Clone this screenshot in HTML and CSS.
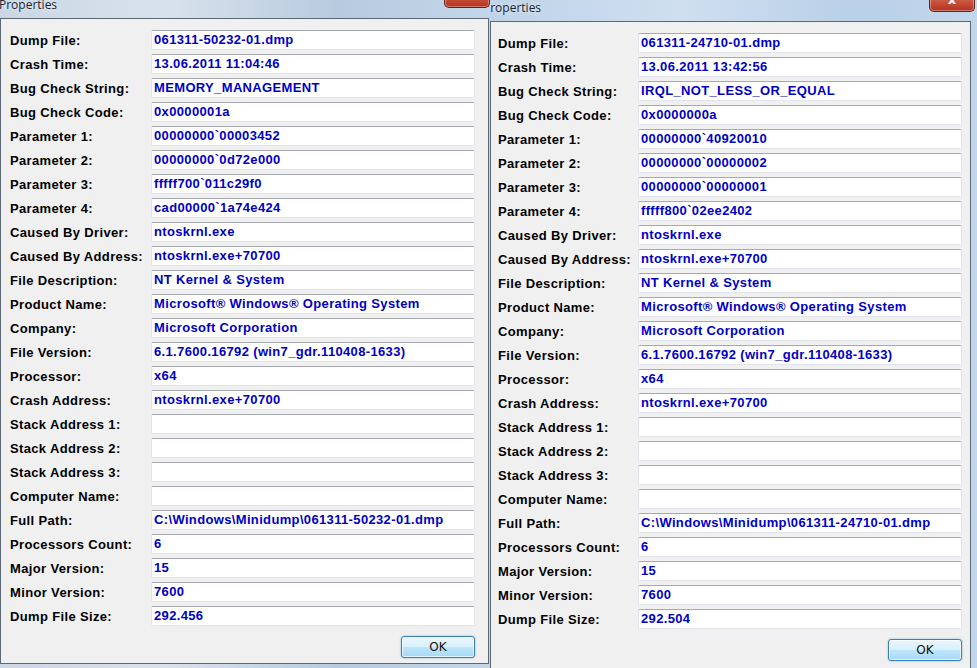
FILE: index.html
```html
<!DOCTYPE html>
<html lang="en">
<head>
  <meta charset="UTF-8" />
  <title>Properties</title>
  <link rel="stylesheet" href="styles.css">
</head>
<body>

  <div class="desktop">

    <!-- second dump, opened first -->
    <div class="window window-back">
      <div class="titlebar">
        <span class="title">Properties</span>
        <span class="close-btn">x</span>
      </div>
      <div class="client">
        <div class="row"><span class="label">Dump File:</span><span class="field">061311-24710-01.dmp</span></div>
        <div class="row"><span class="label">Crash Time:</span><span class="field">13.06.2011 13:42:56</span></div>
        <div class="row"><span class="label">Bug Check String:</span><span class="field">IRQL_NOT_LESS_OR_EQUAL</span></div>
        <div class="row"><span class="label">Bug Check Code:</span><span class="field">0x0000000a</span></div>
        <div class="row"><span class="label">Parameter 1:</span><span class="field">00000000`40920010</span></div>
        <div class="row"><span class="label">Parameter 2:</span><span class="field">00000000`00000002</span></div>
        <div class="row"><span class="label">Parameter 3:</span><span class="field">00000000`00000001</span></div>
        <div class="row"><span class="label">Parameter 4:</span><span class="field">fffff800`02ee2402</span></div>
        <div class="row"><span class="label">Caused By Driver:</span><span class="field">ntoskrnl.exe</span></div>
        <div class="row"><span class="label">Caused By Address:</span><span class="field">ntoskrnl.exe+70700</span></div>
        <div class="row"><span class="label">File Description:</span><span class="field">NT Kernel &amp; System</span></div>
        <div class="row"><span class="label">Product Name:</span><span class="field">Microsoft® Windows® Operating System</span></div>
        <div class="row"><span class="label">Company:</span><span class="field">Microsoft Corporation</span></div>
        <div class="row"><span class="label">File Version:</span><span class="field">6.1.7600.16792 (win7_gdr.110408-1633)</span></div>
        <div class="row"><span class="label">Processor:</span><span class="field">x64</span></div>
        <div class="row"><span class="label">Crash Address:</span><span class="field">ntoskrnl.exe+70700</span></div>
        <div class="row"><span class="label">Stack Address 1:</span><span class="field"></span></div>
        <div class="row"><span class="label">Stack Address 2:</span><span class="field"></span></div>
        <div class="row"><span class="label">Stack Address 3:</span><span class="field"></span></div>
        <div class="row"><span class="label">Computer Name:</span><span class="field"></span></div>
        <div class="row"><span class="label">Full Path:</span><span class="field">C:\Windows\Minidump\061311-24710-01.dmp</span></div>
        <div class="row"><span class="label">Processors Count:</span><span class="field">6</span></div>
        <div class="row"><span class="label">Major Version:</span><span class="field">15</span></div>
        <div class="row"><span class="label">Minor Version:</span><span class="field">7600</span></div>
        <div class="row"><span class="label">Dump File Size:</span><span class="field">292.504</span></div>
        <div class="buttons"><button class="ok-btn">OK</button></div>
      </div>
    </div>

    <!-- active window -->
    <div class="window window-front">
      <div class="titlebar">
        <span class="title">Properties</span>
        <span class="close-btn">x</span>
      </div>
      <div class="client">
        <div class="row"><span class="label">Dump File:</span><span class="field">061311-50232-01.dmp</span></div>
        <div class="row"><span class="label">Crash Time:</span><span class="field">13.06.2011 11:04:46</span></div>
        <div class="row"><span class="label">Bug Check String:</span><span class="field">MEMORY_MANAGEMENT</span></div>
        <div class="row"><span class="label">Bug Check Code:</span><span class="field">0x0000001a</span></div>
        <div class="row"><span class="label">Parameter 1:</span><span class="field">00000000`00003452</span></div>
        <div class="row"><span class="label">Parameter 2:</span><span class="field">00000000`0d72e000</span></div>
        <div class="row"><span class="label">Parameter 3:</span><span class="field">fffff700`011c29f0</span></div>
        <div class="row"><span class="label">Parameter 4:</span><span class="field">cad00000`1a74e424</span></div>
        <div class="row"><span class="label">Caused By Driver:</span><span class="field">ntoskrnl.exe</span></div>
        <div class="row"><span class="label">Caused By Address:</span><span class="field">ntoskrnl.exe+70700</span></div>
        <div class="row"><span class="label">File Description:</span><span class="field">NT Kernel &amp; System</span></div>
        <div class="row"><span class="label">Product Name:</span><span class="field">Microsoft® Windows® Operating System</span></div>
        <div class="row"><span class="label">Company:</span><span class="field">Microsoft Corporation</span></div>
        <div class="row"><span class="label">File Version:</span><span class="field">6.1.7600.16792 (win7_gdr.110408-1633)</span></div>
        <div class="row"><span class="label">Processor:</span><span class="field">x64</span></div>
        <div class="row"><span class="label">Crash Address:</span><span class="field">ntoskrnl.exe+70700</span></div>
        <div class="row"><span class="label">Stack Address 1:</span><span class="field"></span></div>
        <div class="row"><span class="label">Stack Address 2:</span><span class="field"></span></div>
        <div class="row"><span class="label">Stack Address 3:</span><span class="field"></span></div>
        <div class="row"><span class="label">Computer Name:</span><span class="field"></span></div>
        <div class="row"><span class="label">Full Path:</span><span class="field">C:\Windows\Minidump\061311-50232-01.dmp</span></div>
        <div class="row"><span class="label">Processors Count:</span><span class="field">6</span></div>
        <div class="row"><span class="label">Major Version:</span><span class="field">15</span></div>
        <div class="row"><span class="label">Minor Version:</span><span class="field">7600</span></div>
        <div class="row"><span class="label">Dump File Size:</span><span class="field">292.456</span></div>
        <div class="buttons"><button class="ok-btn">OK</button></div>
      </div>
    </div>

  </div>

</body>
</html>
```

FILE: styles.css
```css
* {
  box-sizing: border-box;
  margin: 0;
  padding: 0;
}

body {
  font-family: "Liberation Sans", Arial, sans-serif;
  background: #6f8fb4;
  overflow: hidden;
}

.desktop {
  position: relative;
  width: 977px;
  height: 668px;
  overflow: hidden;
  background: #8fa9c8;
}

/* Aero style window frame */
.window {
  position: absolute;
  display: flex;
  flex-direction: column;
  background: linear-gradient(to right, #c9d6e3 0%, #d8e2ec 35%, #b7cadf 70%, #c4d6ea 100%);
  padding: 0 8px 8px 8px;
}

.window-front {
  left: -8px;
  top: -6px;
  width: 498px;
  height: 678px;
  padding-right: 1px;
  z-index: 2;
}

.window-back {
  left: 482px;
  top: 0;
  width: 497px;
  height: 720px;
  z-index: 1;
  background: linear-gradient(to right, #bdd2e8 0%, #cfdff0 40%, #b9d0e8 75%, #c3d7ec 100%);
}

.titlebar {
  position: relative;
  height: 24px;
  display: flex;
  align-items: center;
}

.window-back .titlebar {
  height: 21px;
}

.title {
  font-family: "Open Sans", "Noto Sans", sans-serif;
  font-size: 12px;
  color: #1b2632;
  text-shadow: 0 0 6px rgba(255, 255, 255, 0.9);
}

.window-front .title {
  margin-left: -1px;
  margin-top: -3px;
}

.window-back .title {
  margin-left: -7px;
  margin-top: -6px;
}

.close-btn {
  position: absolute;
  right: -1px;
  top: -6px;
  width: 46px;
  height: 20px;
  border: 1px solid #5a2620;
  border-top: none;
  border-radius: 0 0 5px 5px;
  background: linear-gradient(to bottom, #d98a78 0%, #c9543e 50%, #b2331f 100%);
  color: #fff;
  font-family: "DejaVu Sans", sans-serif;
  font-weight: bold;
  font-size: 13px;
  line-height: 16px;
  text-align: center;
  box-shadow: inset 0 0 0 1px rgba(255, 255, 255, 0.35);
}

.window-back .close-btn {
  top: -8px;
  right: -4px;
}

.client {
  flex: 1;
  background: #f0f0f0;
  border: 1px solid #5d6875;
  padding: 11px 0 0 9px;
}

.window-back .client {
  padding-left: 7px;
}

.row {
  display: grid;
  grid-template-columns: 141px 324px;
  align-items: center;
  height: 20px;
  margin-bottom: 4px;
}

.window-back .row {
  grid-template-columns: 140px 324px;
}

.label {
  font-size: 13px;
  font-weight: bold;
  letter-spacing: 0.35px;
  color: #000;
  white-space: nowrap;
}

.field {
  height: 20px;
  background: #fff;
  border: 1px solid #e1e4ea;
  border-top-color: #a6a9b2;
  border-radius: 2px;
  padding-left: 2px;
  font-size: 13px;
  font-weight: bold;
  letter-spacing: 0.35px;
  line-height: 18px;
  color: #0000c4;
  white-space: nowrap;
  overflow: hidden;
}

.buttons {
  display: flex;
  justify-content: flex-end;
  width: 465px;
  margin-top: 10px;
}

.window-back .buttons {
  width: 464px;
}

.ok-btn {
  width: 74px;
  height: 22px;
  border: 1px solid #3c7fb1;
  border-radius: 3px;
  background: linear-gradient(to bottom, #eaf6fd 0%, #d9f0fc 48%, #bee6fd 52%, #a7d9f5 100%);
  box-shadow: inset 0 0 0 1px rgba(255, 255, 255, 0.7), 0 0 2px rgba(80, 170, 230, 0.8);
  font-family: "DejaVu Sans", sans-serif;
  font-size: 12px;
  color: #111;
}
```
